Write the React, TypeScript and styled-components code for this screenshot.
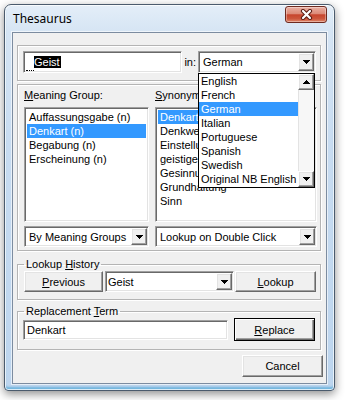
import styled, { createGlobalStyle, css } from "styled-components"

const GlobalStyle = createGlobalStyle`
  * { box-sizing: border-box; }
  html, body { margin: 0; padding: 0; background: #ffffff; }
  body {
    font-family: "Liberation Sans", Arial, sans-serif;
    font-size: 11px;
    color: #000;
  }
`

// classic 3D edges
const sunken = css`
  border: 1px solid;
  border-color: #a0a0a0 #ffffff #ffffff #a0a0a0;
  box-shadow: inset 1px 1px 0 #696969, inset -1px -1px 0 #e3e3e3;
`

const raised = css`
  border: 1px solid;
  border-color: #ffffff #696969 #696969 #ffffff;
  box-shadow: inset -1px -1px 0 #a0a0a0, inset 1px 1px 0 #e3e3e3;
  background: #f0f0f0;
`

const Desktop = styled.div`
  width: 347px;
  height: 400px;
  padding: 4px 0 0 4px;
  overflow: hidden;
`

const Window = styled.div`
  width: 331px;
  height: 387px;
  display: flex;
  flex-direction: column;
  padding: 0 7px 6px 7px;
  border: 1px solid #4b5b6d;
  border-radius: 7px 7px 4px 4px;
  background: linear-gradient(180deg, #e4eef8 0px, #d6e5f4 26px, #c8dcf1 140px, #bdd5ee 100%);
  box-shadow: 0 3px 10px rgba(0, 0, 0, 0.45), inset 0 0 0 1px rgba(255, 255, 255, 0.75),
    inset 0 -3px 2px rgba(40, 150, 205, 0.5);
`

const TitleBar = styled.div`
  height: 27px;
  display: flex;
  justify-content: space-between;
  align-items: flex-start;
`

const Title = styled.span`
  font-family: "Noto Sans", "Open Sans", sans-serif;
  font-size: 12px;
  line-height: 16px;
  margin-top: 6px;
  padding-left: 1px;
`

const CloseButton = styled.div`
  width: 42px;
  height: 17px;
  margin-top: 1px;
  border: 1px solid #6e2a20;
  border-radius: 3px;
  background: linear-gradient(180deg, #eab0a3 0%, #dc8a77 45%, #c7452d 52%, #cc563c 78%, #e08a6d 100%);
  box-shadow: inset 0 0 0 1px rgba(255, 255, 255, 0.35);
  display: flex;
  align-items: center;
  justify-content: center;
`

const Client = styled.div`
  flex: 1;
  background: #f0f0f0;
  border: 1px solid #7c8ca0;
  box-shadow: 0 0 0 1px rgba(255, 255, 255, 0.6);
  display: flex;
  flex-direction: column;
  padding: 12px 5px 0 4px;
`

const etched = css`
  border: 1px solid #b4b4b4;
  box-shadow: inset 1px 1px 0 #ffffff, 1px 1px 0 #ffffff;
`

const TopGroup = styled.div`
  ${etched}
  height: 36px;
  display: flex;
  align-items: flex-start;
  padding: 5px 4px 0 5px;
`

const SearchField = styled.div`
  ${sunken}
  flex: 1;
  height: 22px;
  background: #fff;
  display: flex;
  align-items: flex-start;
  padding: 2px 0 0 2px;
`

const FocusDots = styled.span`
  width: 8px;
  align-self: flex-end;
  margin-bottom: 1px;
  border-bottom: 1px dotted #000;
`

const Selection = styled.span`
  margin-top: 2px;
  background: #000;
  color: #fff;
  line-height: 12px;
  padding-right: 1px;
`

const InLabel = styled.span`
  margin: 0 2px;
  line-height: 22px;
`

const ComboWrap = styled.div`
  position: relative;
  flex-shrink: 0;
`

const Combo = styled.div<{ $width?: number; $height?: number }>`
  ${sunken}
  width: ${(p) => (p.$width ? `${p.$width}px` : "100%")};
  height: ${(p) => p.$height ?? 21}px;
  background: #fff;
  display: flex;
  padding: 1px;
`

const ComboText = styled.span<{ $pad?: number }>`
  flex: 1;
  padding-left: ${(p) => p.$pad ?? 3}px;
  display: flex;
  align-items: center;
  white-space: nowrap;
  overflow: hidden;
`

const ArrowButton = styled.span<{ $size?: number }>`
  ${raised}
  width: 16px;
  height: ${(p) => (p.$size ? `${p.$size}px` : "auto")};
  flex-shrink: 0;
  display: flex;
  align-items: center;
  justify-content: center;
`

const Dropdown = styled.div`
  position: absolute;
  top: 22px;
  left: 0;
  width: 117px;
  height: 115px;
  z-index: 10;
  background: #fff;
  border: 1px solid #000;
  display: flex;
`

const DropList = styled.div`
  flex: 1;
`

const ScrollBar = styled.div`
  width: 16px;
  display: flex;
  flex-direction: column;
`

const ScrollTrack = styled.div`
  flex: 1;
  background: #f7f7f7;
  border-left: 1px solid #e3e3e3;
`

const SynGroup = styled.div`
  ${etched}
  margin-top: 3px;
  height: 167px;
  display: grid;
  grid-template-columns: 125px 162px;
  column-gap: 6px;
  padding: 3px 4px 0 6px;
`

const Column = styled.div`
  display: flex;
  flex-direction: column;
`

const Caption = styled.div`
  line-height: 14px;
  height: 14px;
  margin-bottom: 5px;
  white-space: nowrap;
`

const ListBox = styled.div`
  ${sunken}
  height: 115px;
  background: #fff;
  padding: 2px;
  margin-bottom: 4px;
  overflow: hidden;
`

const ListItem = styled.div<{ $selected?: boolean }>`
  height: 14px;
  line-height: 14px;
  padding-left: 2px;
  white-space: nowrap;
  background: ${(p) => (p.$selected ? "#3399ff" : "transparent")};
  color: ${(p) => (p.$selected ? "#ffffff" : "#000000")};
`

const Fieldset = styled.fieldset<{ $gap: number; $bottom: number }>`
  ${etched}
  margin: ${(p) => p.$gap}px 0 0 0;
  padding: 0 5px ${(p) => p.$bottom}px 6px;
  min-width: 0;
`

const Legend = styled.legend`
  padding: 0 2px;
  line-height: 13px;
  font-size: 11px;
`

const Row = styled.div`
  display: flex;
  align-items: center;
`

const PushButton = styled.div<{ $width: number; $height?: number; $default?: boolean }>`
  ${raised}
  width: ${(p) => p.$width}px;
  height: ${(p) => p.$height ?? 21}px;
  flex-shrink: 0;
  display: flex;
  align-items: center;
  justify-content: center;
  ${(p) =>
    p.$default &&
    css`
      border-color: #000;
      box-shadow: inset 1px 1px 0 #fff, inset -1px -1px 0 #696969, inset -2px -2px 0 #a0a0a0;
    `}
`

const TextInput = styled.div`
  ${sunken}
  width: 206px;
  height: 20px;
  margin-left: -1px;
  margin-right: 6px;
  background: #fff;
  padding-left: 3px;
  display: flex;
  align-items: center;
`

const CancelButton = styled(PushButton)`
  align-self: flex-end;
  margin-top: 5px;
  margin-right: -2px;
`

const U = styled.span`
  text-decoration: underline;
  text-underline-offset: 1px;
`

const Down = () => (
  <svg width="7" height="4" viewBox="0 0 7 4" shapeRendering="crispEdges">
    <path d="M0 0h7v1h-1v1h-1v1h-1v1h-1v-1h-1v-1h-1v-1h-1z" fill="#000" />
  </svg>
)

const Up = () => (
  <svg width="7" height="4" viewBox="0 0 7 4" shapeRendering="crispEdges">
    <path d="M3 0h1v1h1v1h1v1h1v1h-7v-1h1v-1h1v-1h1z" fill="#000" />
  </svg>
)

const CloseGlyph = () => (
  <svg width="13" height="11" viewBox="0 0 13 11">
    <path d="M3 2l7 7M10 2l-7 7" stroke="#5b1d14" strokeWidth="4.2" strokeLinecap="round" />
    <path d="M3 2l7 7M10 2l-7 7" stroke="#ffffff" strokeWidth="2.2" strokeLinecap="round" />
  </svg>
)

const languages = ["English", "French", "German", "Italian", "Portuguese", "Spanish", "Swedish", "Original NB English"]
const meanings = ["Auffassungsgabe (n)", "Denkart (n)", "Begabung (n)", "Erscheinung (n)"]
const synonyms = ["Denkart", "Denkweise", "Einstellung", "geistige Haltung", "Gesinnung", "Grundhaltung", "Sinn"]

export default function App() {
  return (
    <>
      <GlobalStyle />
      <Desktop>
        <Window>
          <TitleBar>
            <Title>Thesaurus</Title>
            <CloseButton>
              <CloseGlyph />
            </CloseButton>
          </TitleBar>
          <Client>
            <TopGroup>
              <SearchField>
                <FocusDots />
                <Selection>Geist</Selection>
              </SearchField>
              <InLabel>in:</InLabel>
              <ComboWrap>
                <Combo $width={118} $height={22}>
                  <ComboText>German</ComboText>
                  <ArrowButton>
                    <Down />
                  </ArrowButton>
                </Combo>
                <Dropdown>
                  <DropList>
                    {languages.map((l) => (
                      <ListItem key={l} $selected={l === "German"}>
                        {l}
                      </ListItem>
                    ))}
                  </DropList>
                  <ScrollBar>
                    <ArrowButton $size={16}>
                      <Up />
                    </ArrowButton>
                    <ScrollTrack />
                    <ArrowButton $size={16}>
                      <Down />
                    </ArrowButton>
                  </ScrollBar>
                </Dropdown>
              </ComboWrap>
            </TopGroup>

            <SynGroup>
              <Column>
                <Caption>
                  <U>M</U>eaning Group:
                </Caption>
                <ListBox>
                  {meanings.map((m, i) => (
                    <ListItem key={m} $selected={i === 1}>
                      {m}
                    </ListItem>
                  ))}
                </ListBox>
                <Combo>
                  <ComboText>By Meaning Groups</ComboText>
                  <ArrowButton>
                    <Down />
                  </ArrowButton>
                </Combo>
              </Column>
              <Column>
                <Caption>
                  <U>S</U>ynonyms:
                </Caption>
                <ListBox>
                  {synonyms.map((s, i) => (
                    <ListItem key={s} $selected={i === 0}>
                      {s}
                    </ListItem>
                  ))}
                </ListBox>
                <Combo>
                  <ComboText>Lookup on Double Click</ComboText>
                  <ArrowButton>
                    <Down />
                  </ArrowButton>
                </Combo>
              </Column>
            </SynGroup>

            <Fieldset $gap={7} $bottom={7}>
              <Legend>
                Lookup <U>H</U>istory
              </Legend>
              <Row>
                <PushButton $width={79}>
                  <span>
                    <U>P</U>revious
                  </span>
                </PushButton>
                <ComboWrap style={{ margin: "0 1px 0 2px" }}>
                  <Combo $width={129}>
                    <ComboText $pad={1}>Geist</ComboText>
                    <ArrowButton>
                      <Down />
                    </ArrowButton>
                  </Combo>
                </ComboWrap>
                <PushButton $width={81}>
                  <span>
                    <U>L</U>ookup
                  </span>
                </PushButton>
              </Row>
            </Fieldset>

            <Fieldset $gap={5} $bottom={8}>
              <Legend>
                Replacement <U>T</U>erm
              </Legend>
              <Row>
                <TextInput>Denkart</TextInput>
                <PushButton $width={81} $height={23} $default>
                  <span>
                    <U>R</U>eplace
                  </span>
                </PushButton>
              </Row>
            </Fieldset>

            <CancelButton $width={81} $height={22}>
              Cancel
            </CancelButton>
          </Client>
        </Window>
      </Desktop>
    </>
  )
}
